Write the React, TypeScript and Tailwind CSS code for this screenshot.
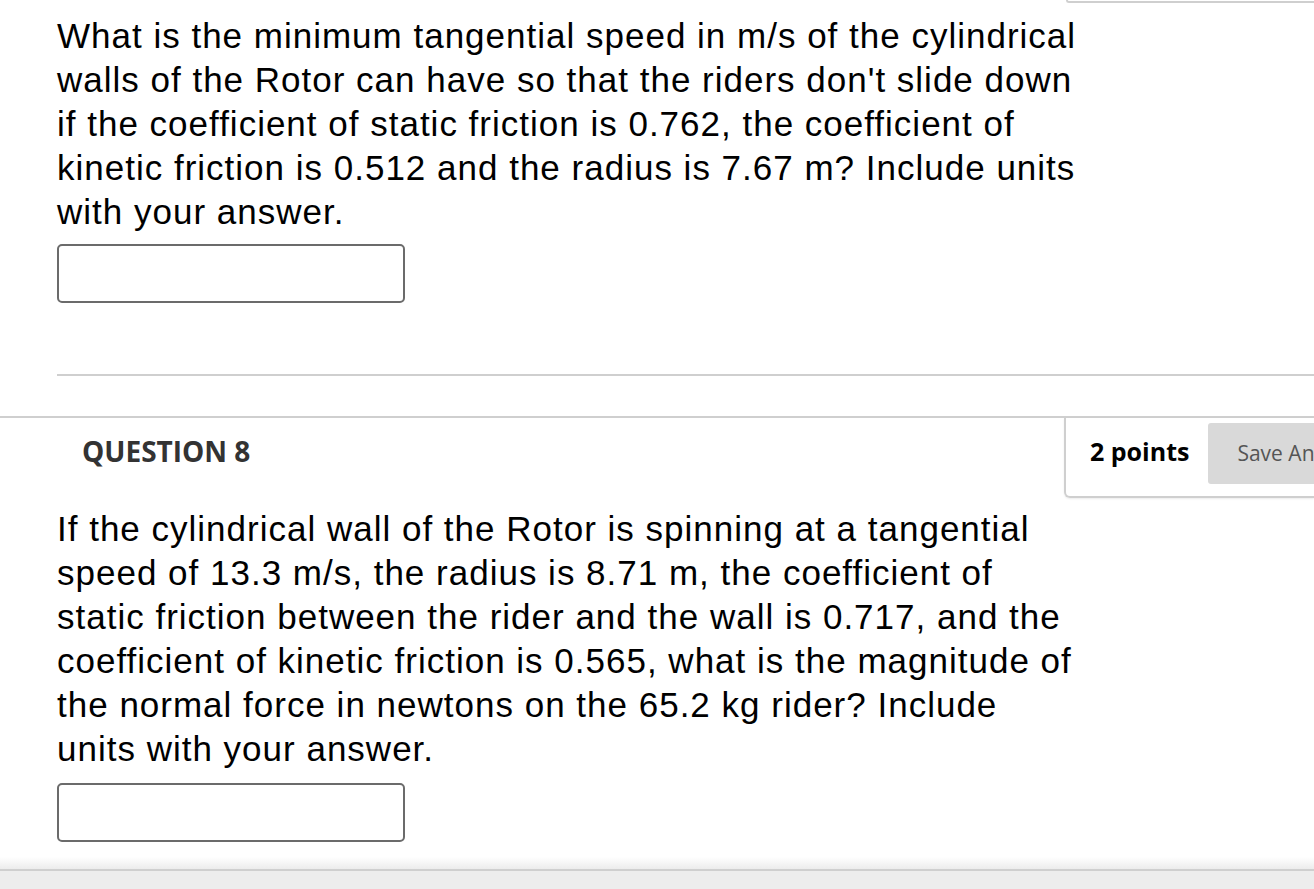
import React from 'react';

const bodyFont = { fontFamily: '"Liberation Sans", Arial, sans-serif' };
const uiFont = { fontFamily: '"Open Sans", "Noto Sans", sans-serif' };

const q7Lines = [
  'What is the minimum tangential speed in m/s of the cylindrical',
  "walls of the Rotor can have so that the riders don't slide down",
  'if the coefficient of static friction is 0.762, the coefficient of',
  'kinetic friction is 0.512 and the radius is 7.67 m? Include units',
  'with your answer.',
];

const q8Lines = [
  'If the cylindrical wall of the Rotor is spinning at a tangential',
  'speed of 13.3 m/s, the radius is 8.71 m, the coefficient of',
  'static friction between the rider and the wall is 0.717, and the',
  'coefficient of kinetic friction is 0.565, what is the magnitude of',
  'the normal force in newtons on the 65.2 kg rider? Include',
  'units with your answer.',
];

const QuestionText = ({ lines }: { lines: string[] }) => (
  <p className="text-[35px] leading-[44px] tracking-[1px] whitespace-nowrap" style={bodyFont}>
    {lines.map((line, i) => (
      <span key={i} className="block">
        {line}
      </span>
    ))}
  </p>
);

const AnswerBox = () => (
  <input
    type="text"
    className="block w-[348px] h-[59px] rounded-[5px] border-2 border-[#6b6b6b] bg-white"
  />
);

export default function App() {
  return (
    <div className="w-[1314px] h-[889px] bg-white overflow-hidden flex flex-col text-black">
      {/* bottom of previous question's points box */}
      <div className="flex justify-end">
        <div className="w-[248px] h-[3px] border-b-2 border-l-2 border-[#cfcfcf] rounded-bl-[6px]" />
      </div>

      <div className="pl-[57px] pt-[11px]">
        <QuestionText lines={q7Lines} />
        <div className="mt-[10px]">
          <AnswerBox />
        </div>
        <div className="mt-[71px] border-t-2 border-[#cfcfcf]" />
      </div>

      <div className="mt-[40px] border-t-2 border-[#cfcfcf]" />

      <div className="flex items-start justify-between">
        <h3 className="pl-[82px] pt-[12px] text-[28px] font-bold text-[#333]" style={uiFont}>
          QUESTION 8
        </h3>
        <div
          className="flex items-center w-[250px] h-[80px] pt-[5px] pb-[12px] border-b-2 border-l-2 border-[#cfcfcf] rounded-bl-[6px] shadow-[0_1px_2px_rgba(0,0,0,0.08)] pl-[24px] gap-[19px]"
          style={uiFont}
        >
          <span className="text-[25px] font-bold whitespace-nowrap -mt-[4px]">2 points</span>
          <button className="h-[61px] bg-[#d9d9d9] rounded-l-[3px] pl-[29px] pr-[20px] text-[21px] text-[#555] whitespace-nowrap">
            Save Answer
          </button>
        </div>
      </div>

      <div className="pl-[57px] pt-[9px]">
        <QuestionText lines={q8Lines} />
        <div className="mt-[12px]">
          <AnswerBox />
        </div>
      </div>

      <div className="mt-auto h-[12px] bg-gradient-to-b from-white to-[#ececec]" />
      <div className="h-[20px] border-t-2 border-[#cfcfcf] bg-[#ededed]" />
    </div>
  );
}
